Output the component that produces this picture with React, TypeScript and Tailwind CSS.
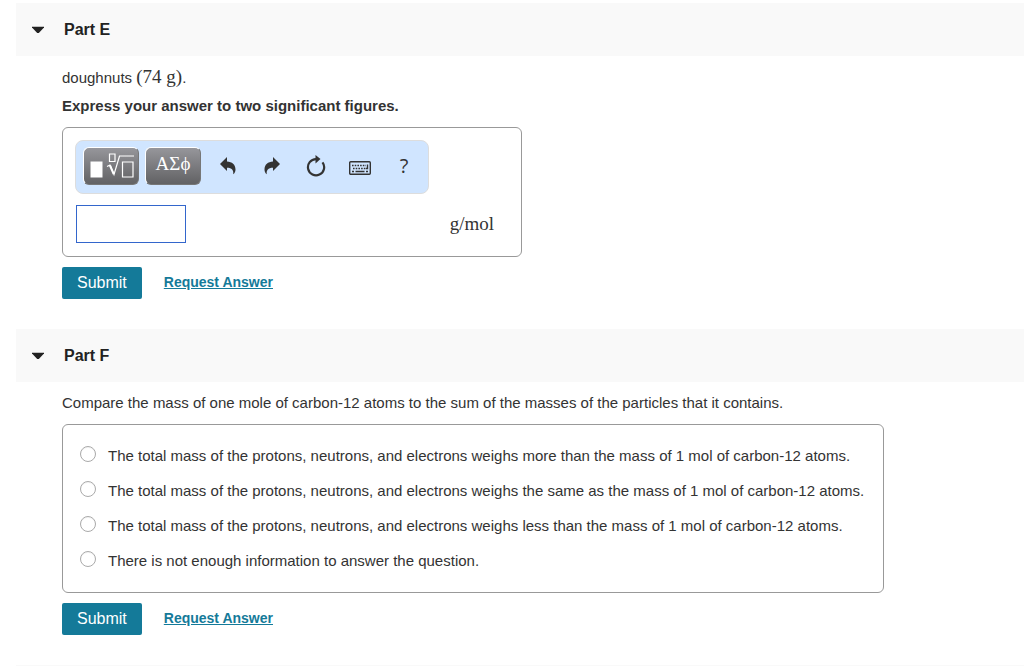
import { useState, type ReactNode } from 'react';

const CHOICES = [
  { value: 'more', label: 'The total mass of the protons, neutrons, and electrons weighs more than the mass of 1 mol of carbon-12 atoms.' },
  { value: 'same', label: 'The total mass of the protons, neutrons, and electrons weighs the same as the mass of 1 mol of carbon-12 atoms.' },
  { value: 'less', label: 'The total mass of the protons, neutrons, and electrons weighs less than the mass of 1 mol of carbon-12 atoms.' },
  { value: 'unknown', label: 'There is not enough information to answer the question.' },
];

function Part({ title, children }: { title: string; children: ReactNode }) {
  const [open, setOpen] = useState(true);

  return (
    <section>
      <h2 className="bg-[#f9f9f9]">
        <button
          type="button"
          aria-expanded={open}
          onClick={() => setOpen(!open)}
          className="flex w-full items-center gap-5 px-4 py-4 text-left text-base leading-[21px] font-bold text-[#222]"
        >
          <svg viewBox="0 0 12 8" className={open ? 'h-2 w-3' : 'h-2 w-3 -rotate-90'} fill="#222">
            <path d="M0 .8h12v.8L6.800 7H5.200L0 1.600z" />
          </svg>
          {title}
        </button>
      </h2>
      {open && <div className="pt-[9px] pr-4 pb-[30px] pl-[46px]">{children}</div>}
    </section>
  );
}

function Actions() {
  return (
    <div className="mt-[10px] flex items-center">
      <button type="submit" className="h-8 rounded-xs bg-[#147a99] px-[15px] text-base text-white">
        Submit
      </button>
      <a href="#answer" className="ml-[22px] pb-[2px] text-sm font-bold text-[#147a99] underline">
        Request Answer
      </a>
    </div>
  );
}

function ToolButton({ label, children }: { label: string; children: ReactNode }) {
  return (
    <button type="button" aria-label={label} className="flex h-[38px] w-11 items-center justify-center text-[#333]">
      {children}
    </button>
  );
}

function Toolbar() {
  const dark =
    'flex h-[38px] w-14 items-center justify-center rounded-md border border-t-white border-l-white border-r-[#777] border-b-[#777] bg-linear-to-b from-[#96969b] to-[#626264] text-white';

  return (
    <div className="flex w-fit rounded-lg border border-[#ddd] bg-[#d0e5ff] pt-[6px] pr-[2px] pb-2 pl-[7px]">
      <button type="button" aria-label="Templates" className={dark}>
        <svg viewBox="0 0 56 38" className="h-[38px] w-14 shrink-0" fill="none" stroke="white">
          <path d="M7.500 14.500h12v16h-12z" fill="white" stroke="none" />
          <path d="M26.500 7h5.500v7.500h-5.500zM39.500 15h10.500v15h-10.500z" strokeWidth="1.200" />
          <path d="M24 19.500l3-1.500 4 9.500L36.500 9H51" strokeWidth="1.200" />
          <path d="M27 18.500l3.700 8.500" strokeWidth="2" />
        </svg>
      </button>
      <button type="button" aria-label="Symbols" className={`${dark} ml-[6px] pb-1 font-['Liberation_Serif',serif] text-[19px]`}>
        ΑΣϕ
      </button>
      <div className="ml-[5px] flex">
        <ToolButton label="Undo">
          <svg viewBox="0 0 16 18" className="h-[18px] w-4" fill="currentColor">
            <path d="M7 0v4.500c5 .2 8.500 3 8.500 8 0 2-.8 4-2.300 4.800.6-4-1.300-6.500-6.200-6.500V14L0 7z" />
          </svg>
        </ToolButton>
        <ToolButton label="Redo">
          <svg viewBox="0 0 16 18" className="h-[18px] w-4" fill="currentColor">
            <path d="M9 0v4.500C4 4.700.5 7.500.5 12.500c0 2 .8 4 2.300 4.800-.6-4 1.300-6.500 6.200-6.500V14l7-7z" />
          </svg>
        </ToolButton>
        <ToolButton label="Reset">
          <svg viewBox="0 0 20 22" className="h-[22px] w-5" fill="none" stroke="currentColor" strokeWidth="2.200">
            <path d="M11.500 4.100H10A8.100 8.100 0 1 0 16.500 7.300" />
            <path d="M9.500 0v8.500L14.500 4z" fill="currentColor" stroke="none" />
          </svg>
        </ToolButton>
        <ToolButton label="Keyboard shortcuts">
          <svg viewBox="0 -2 22 18" className="h-[18px] w-[22px]" fill="none" stroke="currentColor">
            <rect x=".7" y="2.700" width="20.600" height="12.600" rx="1" strokeWidth="1.400" />
            <path d="M3 6.500h14M4 9.500h12" strokeWidth="1.600" strokeDasharray="1.600 1.100" />
            <path d="M3 12.500h2m1.500 0h9m1.500 0h2M18.500 5.500v4h-2" strokeWidth="1.400" />
          </svg>
        </ToolButton>
        <ToolButton label="Help">
          <span className="font-['Open_Sans','Noto_Sans',sans-serif] text-xl">?</span>
        </ToolButton>
      </div>
    </div>
  );
}

export default function App() {
  const [answer, setAnswer] = useState('');
  const [choice, setChoice] = useState('');

  return (
    <main className="min-h-screen bg-white pt-[3px] pl-4 font-['Liberation_Sans',Arial,sans-serif] text-[15px] leading-6 text-[#333]">
      <Part title="Part E">
        <p>
          doughnuts <span className="font-['Liberation_Serif',serif] text-[19px]">(74 g)</span>.
        </p>
        <p className="mt-1 font-bold">Express your answer to two significant figures.</p>
        <form onSubmit={(e) => e.preventDefault()}>
          <div className="mt-[9px] w-full max-w-[460px] rounded-md border border-[#999] p-3">
            <Toolbar />
            <div className="mt-[11px] mb-px flex items-center justify-between pr-[15px] pl-px">
              <input
                type="text"
                aria-label="Molar mass"
                value={answer}
                onChange={(e) => setAnswer(e.target.value)}
                className="h-[38px] w-[110px] border border-[#3366cc] bg-white px-2 outline-none"
              />
              <span className="font-['Liberation_Serif',serif] text-[19px]">g/mol</span>
            </div>
          </div>
          <Actions />
        </form>
      </Part>

      <Part title="Part F">
        <p>Compare the mass of one mole of carbon-12 atoms to the sum of the masses of the particles that it contains.</p>
        <form onSubmit={(e) => e.preventDefault()}>
          <div className="mt-[9px] flex w-fit flex-col gap-[11px] rounded-md border border-[#999] py-[19px] pr-[19px] pl-[17px]">
            {CHOICES.map((c) => (
              <label key={c.value} className="flex items-start gap-3">
                <input
                  type="radio"
                  name="comparison"
                  value={c.value}
                  checked={choice === c.value}
                  onChange={() => setChoice(c.value)}
                  className="mt-[2px] size-4 shrink-0 appearance-none rounded-full border border-[#aaa] bg-white inset-shadow-2xs checked:border-[5px] checked:border-[#147a99]"
                />
                {c.label}
              </label>
            ))}
          </div>
          <Actions />
        </form>
      </Part>

      <div className="h-[2px] bg-[#f9f9f9]" />
    </main>
  );
}
